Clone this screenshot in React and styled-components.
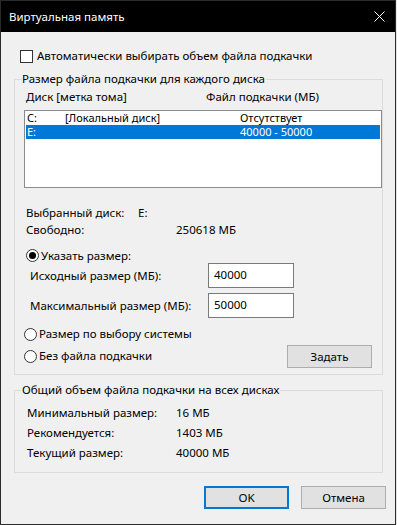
import React from "react";
import styled, { createGlobalStyle } from "styled-components";

const GlobalStyle = createGlobalStyle`
  html, body {
    margin: 0;
    padding: 0;
    background: #e8e8e8;
  }
  body {
    font-family: "Noto Sans", "Open Sans", sans-serif;
    font-size: 11.5px;
    color: #000;
  }
`;

const Window = styled.div`
  width: 396px;
  height: 525px;
  box-sizing: border-box;
  border: 1px solid #2b2b2b;
  background: #f0f0f0;
  display: flex;
  flex-direction: column;
`;

const TitleBar = styled.div`
  height: 31px;
  background: #000;
  color: #fff;
  display: flex;
  align-items: center;
  justify-content: space-between;
  padding: 0 10px 0 8px;
  flex-shrink: 0;
`;

const Title = styled.span`
  font-size: 11.5px;
  line-height: 16px;
`;

const Body = styled.div`
  padding: 0 12px 0 13px;
  display: flex;
  flex-direction: column;
`;

const CheckRow = styled.label`
  display: flex;
  align-items: center;
  height: 16px;
  margin: 16px 0 0 6px;
  line-height: 16px;
`;

const CheckBox = styled.span`
  width: 11px;
  height: 11px;
  border: 1px solid #333;
  background: #fff;
  margin-right: 4px;
`;

const Group = styled.fieldset`
  margin: ${p => p.$top}px 0 0 0;
  padding: 0;
  border: 1px solid #dcdcdc;
  min-width: 0;
`;

const Legend = styled.legend`
  margin-left: 6px;
  padding: 0 1px;
  line-height: 16px;
`;

const GroupContent = styled.div`
  padding: ${p => p.$pad};
  display: flex;
  flex-direction: column;
`;

const HeaderRow = styled.div`
  display: flex;
  height: 16px;
  line-height: 16px;
  margin-left: 2px;
`;

const Col = styled.span`
  width: ${p => p.$w}px;
  flex-shrink: 0;
  white-space: nowrap;
`;

const ListBox = styled.div`
  margin-top: 5px;
  height: 78px;
  box-sizing: border-box;
  border: 1px solid #8c8c8c;
  background: #fff;
  padding: 0 1px;
`;

const ListRow = styled.div`
  display: flex;
  height: 14px;
  line-height: 14px;
  font-size: 11px;
  padding-left: 1px;
  background: ${p => (p.$selected ? "#0078d7" : "transparent")};
  color: ${p => (p.$selected ? "#fff" : "#000")};
`;

const InfoRow = styled.div`
  display: flex;
  height: 16px;
  line-height: 16px;
  margin: ${p => p.$top}px 0 0 2px;
`;

const RadioRow = styled.label`
  display: flex;
  align-items: center;
  height: ${p => p.$h || 16}px;
  line-height: 16px;
  margin: ${p => p.$top}px 0 0 2px;
`;

const Radio = styled.span`
  width: 11px;
  height: 11px;
  border: 1px solid #333;
  border-radius: 50%;
  background: #fff;
  margin-right: 2px;
  display: flex;
  align-items: center;
  justify-content: center;
  &::after {
    content: "";
    display: ${p => (p.$checked ? "block" : "none")};
    width: 7px;
    height: 7px;
    border-radius: 50%;
    background: #000;
  }
`;

const FieldRow = styled.div`
  display: flex;
  align-items: center;
  height: 25px;
  margin: ${p => p.$top}px 0 0 6px;
`;

const FieldLabel = styled.span`
  width: 178px;
  flex-shrink: 0;
`;

const Input = styled.div`
  width: 86px;
  height: 25px;
  box-sizing: border-box;
  border: 1px solid #7a7a7a;
  background: #fff;
  padding-left: 5px;
  line-height: 22px;
`;

const BottomRow = styled.div`
  display: flex;
  justify-content: space-between;
  align-items: flex-end;
  height: 42px;
  margin-top: 8px;
  margin-right: 10px;
`;

const RadioColumn = styled.div`
  display: flex;
  flex-direction: column;
  gap: 6px;
  align-self: flex-start;
  & > label {
    margin-top: 0;
  }
`;

const Button = styled.button`
  width: 85px;
  height: 23px;
  box-sizing: border-box;
  border: 1px solid ${p => (p.$primary ? "#0078d7" : "#adadad")};
  background: #e1e1e1;
  font-family: inherit;
  font-size: 11.5px;
  color: #000;
  padding: 0;
  ${p => p.$primary && "box-shadow: inset 0 0 0 1px #0078d7;"}
`;

const TotalRow = styled.div`
  display: flex;
  height: 20px;
  line-height: 20px;
`;

const ButtonRow = styled.div`
  display: flex;
  justify-content: flex-end;
  gap: 12px;
  margin: 13px -3px 0 0;
`;

const CloseIcon = () => (
  <svg width="11" height="11" viewBox="0 0 11 11">
    <path d="M0.5 0.5 L10.5 10.5 M10.5 0.5 L0.5 10.5" stroke="#fff" strokeWidth="1" />
  </svg>
);

const drives = [
  { letter: "C:", label: "[Локальный диск]", file: "Отсутствует" },
  { letter: "E:", label: "", file: "40000 - 50000", selected: true }
];

const totals = [
  ["Минимальный размер:", "16 МБ"],
  ["Рекомендуется:", "1403 МБ"],
  ["Текущий размер:", "40000 МБ"]
];

const App = () => {
  return (
    <>
      <GlobalStyle />
      <Window>
        <TitleBar>
          <Title>Виртуальная память</Title>
          <CloseIcon />
        </TitleBar>
        <Body>
          <CheckRow>
            <CheckBox />
            Автоматически выбирать объем файла подкачки
          </CheckRow>

          <Group $top={7}>
            <Legend>Размер файла подкачки для каждого диска</Legend>
            <GroupContent $pad="2px 0 6px 9px">
              <HeaderRow>
                <Col $w={180}>Диск [метка тома]</Col>
                <Col $w={150}>Файл подкачки (МБ)</Col>
              </HeaderRow>
              <ListBox>
                {drives.map(d => (
                  <ListRow key={d.letter} $selected={d.selected}>
                    <Col $w={38}>{d.letter}</Col>
                    <Col $w={175}>{d.label}</Col>
                    <Col $w={120}>{d.file}</Col>
                  </ListRow>
                ))}
              </ListBox>

              <InfoRow $top={17}>
                <Col $w={112}>Выбранный диск:</Col>
                <span>E:</span>
              </InfoRow>
              <InfoRow $top={1}>
                <Col $w={150}>Свободно:</Col>
                <span>250618 МБ</span>
              </InfoRow>

              <RadioRow $top={11} $h={13}>
                <Radio $checked />
                Указать размер:
              </RadioRow>
              <FieldRow $top={1}>
                <FieldLabel>Исходный размер (МБ):</FieldLabel>
                <Input>40000</Input>
              </FieldRow>
              <FieldRow $top={5}>
                <FieldLabel>Максимальный размер (МБ):</FieldLabel>
                <Input>50000</Input>
              </FieldRow>

              <BottomRow>
                <RadioColumn>
                  <RadioRow>
                    <Radio />
                    Размер по выбору системы
                  </RadioRow>
                  <RadioRow>
                    <Radio />
                    Без файла подкачки
                  </RadioRow>
                </RadioColumn>
                <Button>Задать</Button>
              </BottomRow>
            </GroupContent>
          </Group>

          <Group $top={7}>
            <Legend>Общий объем файла подкачки на всех дисках</Legend>
            <GroupContent $pad="5px 0 9px 12px">
              {totals.map(([label, value]) => (
                <TotalRow key={label}>
                  <Col $w={149}>{label}</Col>
                  <span>{value}</span>
                </TotalRow>
              ))}
            </GroupContent>
          </Group>

          <ButtonRow>
            <Button $primary>OK</Button>
            <Button>Отмена</Button>
          </ButtonRow>
        </Body>
      </Window>
    </>
  );
};

export default App;
